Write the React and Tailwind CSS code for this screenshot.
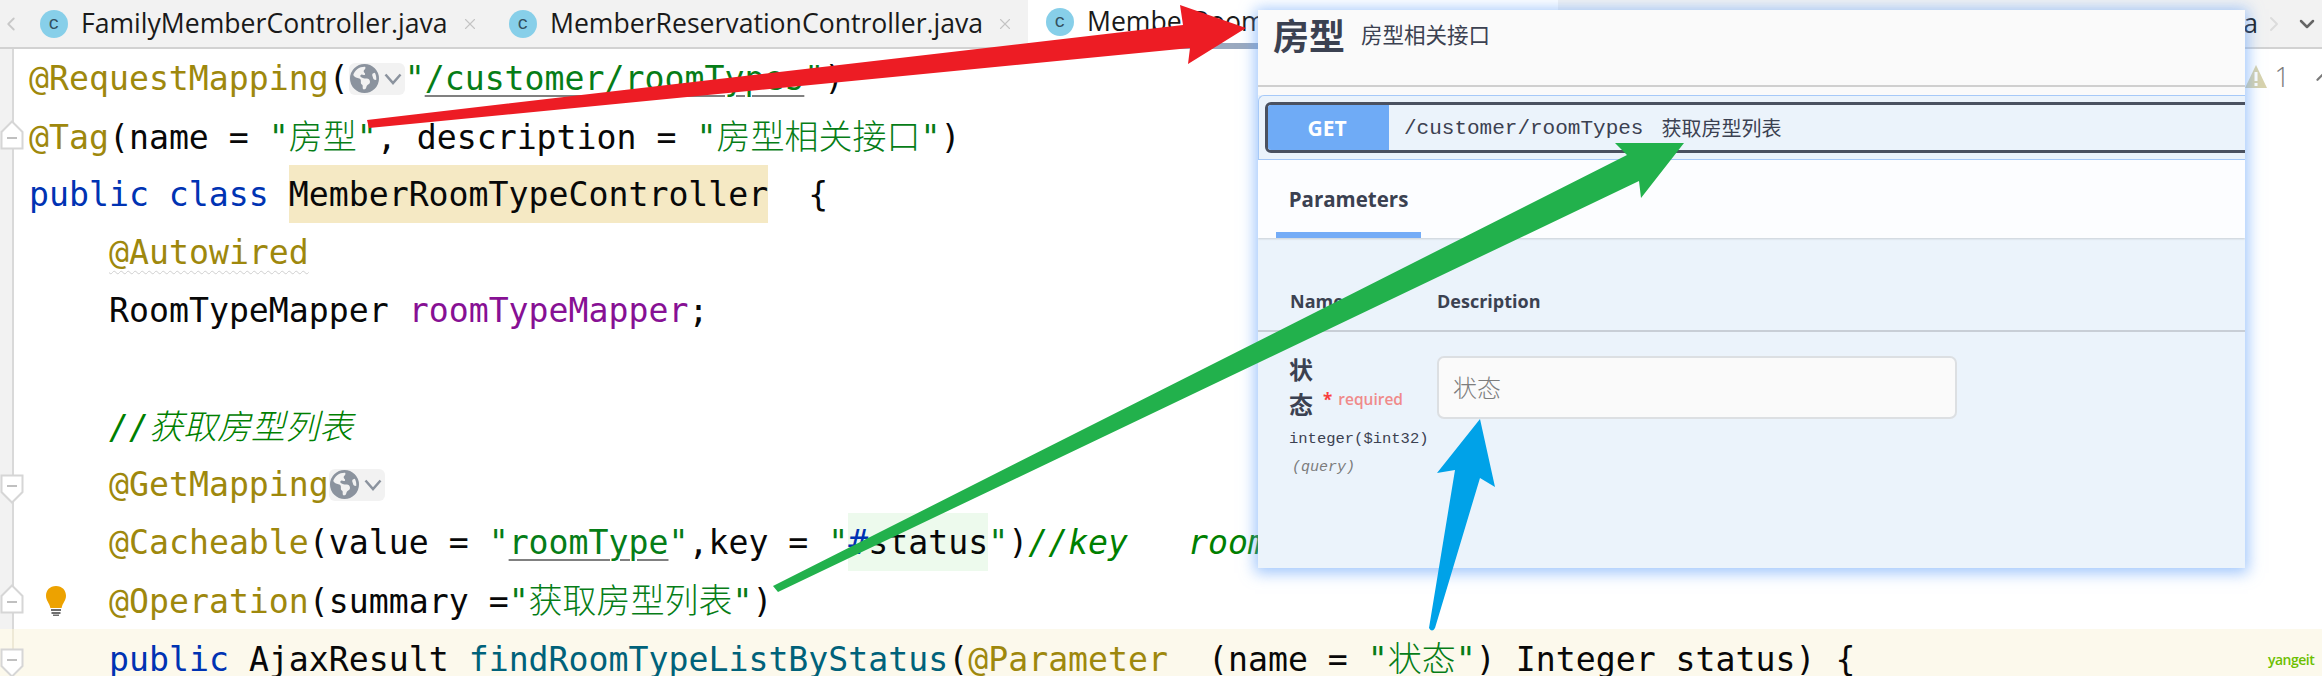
import React from 'react';
import { ChevronDown, ChevronLeft, ChevronRight, ChevronUp, X } from 'lucide-react';
import { FaEarthAmericas } from 'react-icons/fa6';

const ClassIcon = () => (
  <span className="w-[28px] h-[28px] shrink-0 rounded-full bg-[#87cfe9] flex items-center justify-center text-[18px] leading-none text-[#33505f] font-['Liberation_Mono',monospace]">
    c
  </span>
);

const Tab = ({ name, width, active, close, clip }) => (
  <div
    className={`shrink-0 flex items-center gap-[13px] overflow-hidden ${width} ${
      active ? 'self-start h-[49px] pl-[18px] bg-white border-b-[6px] border-[#9aa9bf]' : 'h-full pl-[12px]'
    }`}
  >
    <ClassIcon />
    <span className={`text-[26.6px] text-[#1a1a1a] whitespace-nowrap ${clip ? 'ml-auto' : ''}`}>{name}</span>
    {close && <X size={18} className="text-[#c4c4c4] shrink-0" strokeWidth={1.5} />}
  </div>
);

// code colours, same as the IDE light theme
const Ann = ({ children }) => <span className="text-[#9e880d]">{children}</span>;
const Str = ({ children }) => <span className="text-[#067d17]">{children}</span>;
const Cjk = ({ children }) => <span className="text-[34px] font-light">{children}</span>;
const Kw = ({ children }) => <span className="text-[#0033b3]">{children}</span>;
const Ref = ({ children }) => (
  <span className="underline decoration-[#808080] decoration-2 underline-offset-[5px]">{children}</span>
);

const GlobeHint = () => (
  <span className="inline-flex align-middle items-center w-[56px] h-[32px] -mt-[4px] rounded-[6px] bg-[#f2f2f2] text-[#8b939e] pl-[1px]">
    <FaEarthAmericas size={29} className="shrink-0" />
    <svg width="18" height="12" viewBox="0 0 18 12" className="shrink-0 ml-[5px]">
      <path d="M1.500 1.500 9 10 16.500 1.500" fill="none" stroke="currentColor" strokeWidth="2.500" />
    </svg>
  </span>
);

const FoldMark = ({ down }) => (
  <svg width="24" height="30" viewBox="0 0 24 30" className={`absolute left-0 ${down ? 'top-[19px]' : 'top-[13px]'}`}>
    <path
      d={down ? 'M1.500 1.500H22.500V18L12 28.500 1.500 18Z' : 'M12 1.500 22.500 12V28.500H1.500V12Z'}
      fill="#fff"
      stroke="#d6d6d6"
      strokeWidth="2"
    />
    <path d={down ? 'M7 12H17' : 'M7 18H17'} stroke="#c0c0c0" strokeWidth="2" />
  </svg>
);

const Line = ({ children, fold, current, bulb, indent, right }) => (
  <div className={`relative flex h-[58px] leading-[60px] whitespace-pre ${current ? 'bg-[#fcf9ec]' : ''}`}>
    <div className={`w-[14px] shrink-0 border-r-2 ${current ? 'border-[#eee9d6]' : 'bg-[#f2f2f2] border-[#d9d9d9]'}`} />
    {fold && <FoldMark down={fold === 'down'} />}
    {bulb && (
      <svg width="22" height="30" viewBox="0 0 22 30" className="absolute left-[45px] top-[15px]">
        <path d="M11 0C4.800 0 1 4.400 1 9.700c0 5 3.400 7 4.400 12.300h11.200C17.600 16.700 21 14.700 21 9.700 21 4.400 17.200 0 11 0Z" fill="#eda200" />
        <path d="M6 24h10M6.500 27h9M8 29.500h6" stroke="#6e6e6e" strokeWidth="2" />
      </svg>
    )}
    <div className={`flex-1 flex min-w-0 ${indent ? 'pl-[95px]' : 'pl-[15px]'}`}>
      <div>{children}</div>
      {right}
    </div>
  </div>
);

const CodePane = () => (
  <div className="font-['DejaVu_Sans_Mono','Noto_Sans_CJK_SC',monospace] text-[33.2px] text-[#080808]">
    <Line
      right={
        <div className="ml-auto flex items-center -mr-[12px] text-[#7a7a7a] -mt-[2px]">
          <svg width="22" height="24" viewBox="0 0 22 24">
            <path d="M11 0 22 23H0Z" fill="#d8d2ac" />
            <path d="M11 7v9M11 18v3" stroke="#fff" strokeWidth="3" />
          </svg>
          <span className="ml-[8px] font-['Open_Sans',sans-serif] text-[27px] font-light">1</span>
          <ChevronUp size={22} strokeWidth={2.5} className="ml-[22px]" />
        </div>
      }
    >
      <Ann>@RequestMapping</Ann>(<GlobeHint />
      <Str>"<Ref>/customer/roomTypes</Ref>"</Str>)
    </Line>
    <Line fold="up">
      <Ann>@Tag</Ann>(name = <Str>"<Cjk>房型</Cjk>"</Str>, description = <Str>"<Cjk>房型相关接口</Cjk>"</Str>)
    </Line>
    <Line>
      <Kw>public class </Kw>
      <span className="inline-block h-[58px] bg-[#f5e9c4]">MemberRoomTypeController</span>  {'{'}
    </Line>
    <Line indent>
      <span className="text-[#9e880d] underline decoration-wavy decoration-[#cfcfcf] decoration-1 underline-offset-[6px]">@Autowired</span>
    </Line>
    <Line indent>
      RoomTypeMapper <span className="text-[#871094]">roomTypeMapper</span>;
    </Line>
    <Line />
    <Line indent>
      <span className="text-[#008000] italic">//<Cjk>获取房型列表</Cjk></span>
    </Line>
    <Line indent fold="down">
      <Ann>@GetMapping</Ann>
      <GlobeHint />
    </Line>
    <Line indent>
      <Ann>@Cacheable</Ann>(value = <Str>"<Ref>roomType</Ref>"</Str>,key = <Str>"</Str>
      <span className="inline-block h-[58px] bg-[#edfaed]"><Kw>#</Kw>status</span>
      <Str>"</Str>)<span className="text-[#008000] italic">//key   roomType</span>
    </Line>
    <Line indent fold="up" bulb>
      <Ann>@Operation</Ann>(summary =<Str>"<Cjk>获取房型列表</Cjk>"</Str>)
    </Line>
    <Line indent fold="down" current>
      <Kw>public </Kw>AjaxResult <span className="text-[#00627a]">findRoomTypeListByStatus</span>(<Ann>@Parameter</Ann>  (name = <Str>"<Cjk>状态</Cjk>"</Str>) Integer status) {'{'}
    </Line>
  </div>
);

const SwaggerPanel = () => (
  <div className="absolute left-[1258px] top-[10px] w-[987px] h-[558px] bg-[#ebf3fb] shadow-[0_2px_14px_3px_rgba(97,160,250,0.6)] flex flex-col overflow-hidden text-[#3b4151] font-['Open_Sans','Noto_Sans_CJK_SC',sans-serif]">
    <div className="h-[77px] shrink-0 bg-[#fafafa] border-b-2 border-[#cfcfcf] pl-[15px] pt-[5px] flex items-start gap-[16px]">
      <span className="text-[36px] leading-[44px] font-bold">房型</span>
      <span className="text-[21.500px] leading-[30px] mt-[5px]">房型相关接口</span>
    </div>
    <div className="h-[8px] shrink-0 bg-[#fafafa]" />
    <div className="h-[65px] shrink-0 border border-r-0 border-[#a6c9f8] rounded-tl-[6px] pl-[6px] pt-[6px]">
      <div className="h-[51px] -mr-[8px] border-[3px] border-[#4a5160] rounded-[6px] flex items-center overflow-hidden">
        <div className="w-[121px] h-full pr-[3px] pt-[2px] bg-[#6fabf6] flex items-center justify-center text-white font-bold text-[21px]">GET</div>
        <span className="ml-[15px] pt-[2px] font-['Liberation_Mono',monospace] text-[21px]">/customer/roomTypes</span>
        <span className="ml-[18px] pt-[2px] text-[20px]">获取房型列表</span>
      </div>
    </div>
    <div className="h-[78px] shrink-0 bg-[#fcfdff] shadow-[0_1px_2px_rgba(0,0,0,0.15)] pl-[18px] flex flex-col justify-end">
      <div className="w-[145px] h-[78px] border-b-[6px] border-[#74acf7] flex items-center justify-center font-bold text-[20.500px] pt-[7px]">
        Parameters
      </div>
    </div>
    <div className="h-[94px] shrink-0 border-b-2 border-[#c8ced6] flex items-end pb-[16px] pl-[32px] text-[18px] font-bold leading-[26px]">
      <span className="w-[147px]">Name</span>
      <span>Description</span>
    </div>
    <div className="flex pt-[20px] pl-[31px]">
      <div className="w-[148px] shrink-0">
        <div className="text-[24px] font-bold leading-[35px]">状</div>
        <div className="flex items-center h-[35px]">
          <span className="text-[24px] font-bold">态</span>
          <span className="text-[#f93e3e] ml-[10px] text-[17px] font-bold -translate-y-[5px]">*</span>
          <span className="text-[#f08a8a] ml-[6px] text-[15.500px] font-semibold -translate-y-[5px]">required</span>
        </div>
        <div className="font-['Liberation_Mono',monospace] text-[15.500px] leading-[24px] mt-[5px] font-medium">integer($int32)</div>
        <div className="font-['Liberation_Mono',monospace] text-[15px] leading-[24px] mt-[5px] ml-[3px] italic text-[#7c7c7c]">(query)</div>
      </div>
      <div className="w-[520px] h-[63px] mt-[4px] bg-[#fafafa] border-2 border-[#dcdfe2] rounded-[7px] pl-[14px] flex items-center text-[24px] text-[#7d7d7d] font-light">
        状态
      </div>
    </div>
  </div>
);

// hand-drawn annotation arrows on top of the screenshot
const Arrows = () => (
  <svg width="2322" height="676" viewBox="0 0 2322 676" className="absolute left-0 top-0 pointer-events-none">
    <path d="M367 120 1183 25 1180 5 1246 28 1188 64 1190 48 369 128Z" fill="#ed1c24" />
    <path d="M773 586 1627 155 1615 143 1684 143 1641 198 1639 181 778 592Z" fill="#22b14c" strokeLinejoin="round" />
    <path d="M1429 628 1455 470 1437 473 1480 419 1495 487 1480 478 1435 628Q1432 633 1429 628Z" fill="#00a2e8" />
  </svg>
);

export default function App() {
  return (
    <div className="relative w-[2322px] h-[676px] overflow-hidden bg-white font-['Open_Sans','Noto_Sans_CJK_SC',sans-serif]">
      <div className="h-[49px] bg-[#f2f2f2] border-b-2 border-[#d2d2d2] flex items-stretch">
        <div className="w-[28px] shrink-0 flex items-center text-[#c8c8c8]">
          <ChevronLeft size={22} />
        </div>
        <Tab name="FamilyMemberController.java" width="w-[469px]" close />
        <Tab name="MemberReservationController.java" width="w-[531px]" close />
        <Tab name="MemberRoomTypeController.java" width="w-[530px]" active />
        <Tab name="RoomTypeController.java" width="w-[354px]" />
        <Tab name="RoomTypeMapper.java" width="w-[346px]" clip />
        <div className="flex-1 flex items-center justify-between pl-[4px] pr-[3px]">
          <ChevronRight size={24} className="text-[#dcdcdc]" />
          <ChevronDown size={24} strokeWidth={2.5} className="text-[#666666]" />
        </div>
      </div>
      <CodePane />
      <SwaggerPanel />
      <Arrows />
      <span className="absolute left-[2268px] top-[650px] text-[14px] leading-[20px] font-semibold text-[#6cbf00] tracking-[-0.5px]">yangeit</span>
    </div>
  );
}
